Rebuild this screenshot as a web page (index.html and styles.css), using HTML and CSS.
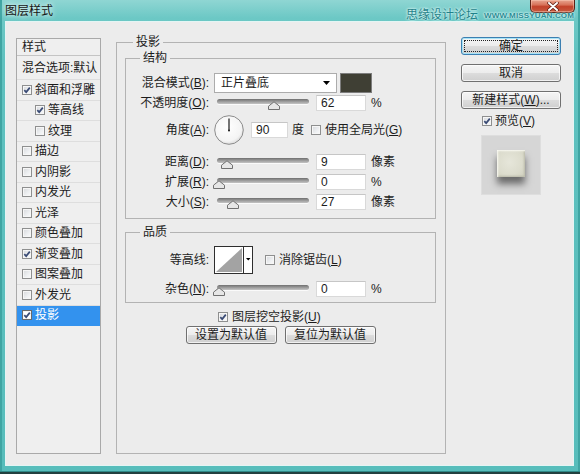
FILE: index.html
```html
<!DOCTYPE html>
<html lang="zh-CN">
<head>
<meta charset="utf-8">
<title>图层样式</title>
<link rel="stylesheet" href="styles.css">
</head>
<body>
<div class="window">
  <div class="titlebar">
    <span class="title">图层样式</span>
    <span class="watermark"><span class="wm-cn">思缘设计论坛</span><span class="wm-en">WWW.MISSYUAN.COM</span></span>
  </div>
  <span class="close"><svg width="12" height="9" viewBox="0 0 12 9"><path d="M2 1L10 8M10 1L2 8" stroke="#5a1a10" stroke-width="3.4" stroke-linecap="round"/><path d="M2 1L10 8M10 1L2 8" stroke="#fff" stroke-width="2" stroke-linecap="round"/></svg></span>

  <div class="client">
    <div class="stylelist">
      <div class="li head">样式</div>
      <div class="li blend">混合选项:默认</div>
      <div class="li"><span class="cb on"><svg viewBox="0 0 8 8"><path d="M1.3 4.1L3.2 6.1L6.8 1.6"/></svg></span>斜面和浮雕</div>
      <div class="li sub"><span class="cb on"><svg viewBox="0 0 8 8"><path d="M1.3 4.1L3.2 6.1L6.8 1.6"/></svg></span>等高线</div>
      <div class="li sub"><span class="cb"></span>纹理</div>
      <div class="li"><span class="cb"></span>描边</div>
      <div class="li"><span class="cb"></span>内阴影</div>
      <div class="li"><span class="cb"></span>内发光</div>
      <div class="li"><span class="cb"></span>光泽</div>
      <div class="li"><span class="cb"></span>颜色叠加</div>
      <div class="li"><span class="cb on"><svg viewBox="0 0 8 8"><path d="M1.3 4.1L3.2 6.1L6.8 1.6"/></svg></span>渐变叠加</div>
      <div class="li"><span class="cb"></span>图案叠加</div>
      <div class="li"><span class="cb"></span>外发光</div>
      <div class="li sel"><span class="cb on"><svg viewBox="0 0 8 8"><path d="M1.3 4.1L3.2 6.1L6.8 1.6"/></svg></span>投影</div>
    </div>

    <fieldset class="group main">
      <legend>投影</legend>

      <fieldset class="group inner structure">
        <legend>结构</legend>
        <div class="row">
          <span class="lbl">混合模式(<u>B</u>):</span>
          <span class="select"><span>正片叠底</span><svg width="7" height="4" viewBox="0 0 7 4"><path d="M0 0H7L3.5 4Z" fill="#000"/></svg></span>
          <span class="swatch"></span>
        </div>
        <div class="row">
          <span class="lbl">不透明度(<u>O</u>):</span>
          <span class="slider"><span class="track"></span><span class="thumb" style="left:53.5px"><svg width="12" height="9" viewBox="0 0 12 9"><path d="M0.5 8.5V5.2L6 0.8L11.5 5.2V8.5Z" fill="#e6e6e6" stroke="#707070"/></svg></span></span>
          <span class="num">62</span>
          <span class="unit">%</span>
        </div>
        <div class="row r-angle">
          <span class="lbl">角度(<u>A</u>):</span>
          <svg class="dial" width="30" height="30" viewBox="0 0 30 30"><defs><radialGradient id="dg" cx="45%" cy="40%" r="65%"><stop offset="0" stop-color="#ffffff"/><stop offset="0.75" stop-color="#f4f4f4"/><stop offset="1" stop-color="#d2d2d2"/></radialGradient></defs><circle cx="15" cy="15" r="14.3" fill="url(#dg)" stroke="#8c8c8c"/><line x1="15" y1="15.5" x2="15" y2="3.5" stroke="#1a1a1a" stroke-width="1.2"/><circle cx="15" cy="15.5" r="1" fill="#1a1a1a"/></svg>
          <span class="num angle">90</span>
          <span class="unit">度</span>
          <span class="cb gap7"></span>
          <span class="cb-label">使用全局光(<u>G</u>)</span>
        </div>
        <div class="row r-dist">
          <span class="lbl">距离(<u>D</u>):</span>
          <span class="slider"><span class="track"></span><span class="thumb" style="left:6.5px"><svg width="12" height="9" viewBox="0 0 12 9"><path d="M0.5 8.5V5.2L6 0.8L11.5 5.2V8.5Z" fill="#e6e6e6" stroke="#707070"/></svg></span></span>
          <span class="num">9</span>
          <span class="unit">像素</span>
        </div>
        <div class="row">
          <span class="lbl">扩展(<u>R</u>):</span>
          <span class="slider"><span class="track"></span><span class="thumb" style="left:-1.5px"><svg width="12" height="9" viewBox="0 0 12 9"><path d="M0.5 8.5V5.2L6 0.8L11.5 5.2V8.5Z" fill="#e6e6e6" stroke="#707070"/></svg></span></span>
          <span class="num">0</span>
          <span class="unit">%</span>
        </div>
        <div class="row">
          <span class="lbl">大小(<u>S</u>):</span>
          <span class="slider"><span class="track"></span><span class="thumb" style="left:12.5px"><svg width="12" height="9" viewBox="0 0 12 9"><path d="M0.5 8.5V5.2L6 0.8L11.5 5.2V8.5Z" fill="#e6e6e6" stroke="#707070"/></svg></span></span>
          <span class="num">27</span>
          <span class="unit">像素</span>
        </div>
      </fieldset>

      <fieldset class="group inner quality">
        <legend>品质</legend>
        <div class="row r-contour">
          <span class="lbl">等高线:</span>
          <svg class="contour" width="39" height="28" viewBox="0 0 39 28"><rect x="0.5" y="0.5" width="38" height="27" fill="#fff" stroke="#2e2e2e"/><path d="M2 26L28 2V26Z" fill="#a3a3a3"/><line x1="29.5" y1="0.5" x2="29.5" y2="27.5" stroke="#2e2e2e"/><path d="M32 12H36.5L34.25 14.6Z" fill="#000"/></svg>
          <span class="cb gap12"></span>
          <span class="cb-label">消除锯齿(<u>L</u>)</span>
        </div>
        <div class="row r-noise">
          <span class="lbl">杂色(<u>N</u>):</span>
          <span class="slider"><span class="track"></span><span class="thumb" style="left:-1px"><svg width="12" height="9" viewBox="0 0 12 9"><path d="M0.5 8.5V5.2L6 0.8L11.5 5.2V8.5Z" fill="#e6e6e6" stroke="#707070"/></svg></span></span>
          <span class="num">0</span>
          <span class="unit">%</span>
        </div>
      </fieldset>

      <div class="knockout"><span class="cb on"><svg viewBox="0 0 8 8"><path d="M1.3 4.1L3.2 6.1L6.8 1.6"/></svg></span><span class="cb-label">图层挖空投影(<u>U</u>)</span></div>
      <div class="defaults">
        <span class="btn wide">设置为默认值</span>
        <span class="btn wide">复位为默认值</span>
      </div>
    </fieldset>

    <div class="actions">
      <span class="btn default"><span class="focus">确定</span></span>
      <span class="btn">取消</span>
      <span class="btn">新建样式(<u>W</u>)...</span>
      <div class="preview-check"><span class="cb on"><svg viewBox="0 0 8 8"><path d="M1.3 4.1L3.2 6.1L6.8 1.6"/></svg></span><span class="cb-label">预览(<u>V</u>)</span></div>
      <div class="preview"><span class="pv-square"></span></div>
    </div>
  </div>
</div>
</body>
</html>
```
FILE: styles.css
```css
* { box-sizing: border-box; }
html, body { margin: 0; padding: 0; }
body {
  width: 580px;
  height: 474px;
  overflow: hidden;
  font: 12px/16px "Liberation Sans", "Noto Sans CJK SC", sans-serif;
  color: #1c1c1c;
  background: #55bcba;
}
u { text-decoration: underline; text-underline-offset: 1px; }

.window {
  position: relative;
  width: 580px;
  height: 474px;
  display: flex;
  flex-direction: column;
  padding: 0 6px 8px 5px;
  background: linear-gradient(180deg, #8fd6d3 0px, #6cc8c5 18px, #5ec1bf 60px, #57bdbb 100%);
  box-shadow: inset 0 -2px 0 #22403f, inset 0 -3px 0 #2f8987, inset 2px 0 0 #3fa5a3, inset -2px 0 0 #3fa5a3;
}

/* title bar */
.titlebar {
  height: 21px;
  flex: none;
  display: flex;
  align-items: flex-start;
}
.title {
  margin-top: 3px;
  font-size: 12px;
  line-height: 16px;
  color: #151515;
  text-shadow: 0 0 4px rgba(255,255,255,0.9), 0 0 8px rgba(255,255,255,0.6);
}
.watermark {
  position: relative;
  z-index: 1;
  margin-left: auto;
  align-self: flex-end;
  display: flex;
  align-items: center;
  height: 13px;
  margin-bottom: -1px;
}
.wm-cn {
  font-size: 12px;
  line-height: 13px;
  color: #1f8289;
  text-shadow: 0 0 2px #e9fbfa, 0 0 3px #e9fbfa;
}
.wm-en {
  margin-left: 6px;
  font-size: 8px;
  line-height: 13px;
  font-weight: bold;
  letter-spacing: 0.15px;
  color: #2a8d94;
  text-shadow: 0 0 2px #e9fbfa, 0 0 2px #e9fbfa;
}
.close {
  position: absolute;
  top: 0;
  right: 5px;
  width: 45px;
  height: 13px;
  display: flex;
  align-items: center;
  justify-content: center;
  border: 1px solid #5b2216;
  border-top: none;
  border-radius: 0 0 5px 5px;
  background: linear-gradient(180deg, #e7a590 0%, #d8735a 40%, #c2422a 55%, #c75a40 100%);
  box-shadow: inset 0 0 0 1px rgba(255,210,190,0.45);
}

/* client area */
.client {
  flex: 1;
  display: flex;
  border: 1px solid #e4f5f4;
  background: #ececec;
  padding: 12px 12px 11px 10px;
}

/* style list */
.stylelist {
  flex: none;
  width: 85px;
  margin-top: 4px;
  border: 1px solid #a9a9a9;
  background: #efefef;
  overflow: hidden;
}
.li {
  height: 20.5px;
  display: flex;
  align-items: center;
  padding-left: 5px;
  border-bottom: 1px solid #dedede;
  white-space: nowrap;
}
.li.head { height: 17px; border-bottom-color: #c4c4c4; }
.li.blend { height: 24px; }
.li.sub { padding-left: 18px; }
.li .cb { margin-right: 3px; }
.li.sel { background: #3392ee; color: #fff; border-bottom-color: #3392ee; }
.li.sel .cb { border-color: #6a6a6a; background: #fff; }

/* checkbox */
.cb {
  flex: none;
  width: 10px;
  height: 10px;
  display: inline-flex;
  align-items: center;
  justify-content: center;
  border: 1px solid #8e8f8f;
  background: linear-gradient(135deg, #d6d8db 0%, #eef0f2 60%, #fbfbfb 100%);
  box-shadow: inset 0 0 0 1px #f6f6f6;
}
.cb svg { width: 8px; height: 8px; }
.cb svg path { fill: none; stroke: #3a4b75; stroke-width: 1.7; }
.cb-label { margin-left: 4px; white-space: nowrap; }
.gap7 { margin-left: 7px; }
.gap12 { margin-left: 12px; }

/* group boxes */
.group {
  display: block;
  margin: 0;
  min-width: 0;
  border: 1px solid #b3b3b3;
}
.group > legend {
  padding: 0 3px;
  line-height: 16px;
}
.main {
  flex: none;
  width: 330px;
  margin-left: 15px;
  padding: 0 9px 0 8px;
}
.main > legend { margin-left: 8px; }
.inner { padding: 0; }
.inner > legend { margin-left: 14px; }
.structure { padding: 7px 0 6px; }
.quality { margin-top: 5px; padding: 6px 0 3px; }

.row {
  height: 20px;
  display: flex;
  align-items: center;
  white-space: nowrap;
}
.r-angle { height: 30px; margin-top: 2px; }
.r-dist { margin-top: 7px; }
.r-contour { height: 28px; }
.r-noise { margin-top: 5px; }
.lbl {
  flex: none;
  width: 83px;
  margin-right: 5px;
  text-align: right;
}

.select {
  flex: none;
  width: 123px;
  height: 20px;
  display: flex;
  align-items: center;
  justify-content: space-between;
  padding: 0 6px 0 6px;
  background: #fff;
  border: 1px solid #acacac;
}
.swatch {
  flex: none;
  width: 32px;
  height: 20px;
  margin-left: 3px;
  background: #3f3f34;
  border: 1px solid #7d7d7d;
}

.slider {
  position: relative;
  flex: none;
  width: 98px;
  height: 20px;
}
.track {
  display: block;
  margin: 6px 3px 0;
  height: 5px;
  border-radius: 3px;
  background: linear-gradient(180deg, #6f6f6f 0%, #9b9b9b 50%, #c4c4c4 100%);
  box-shadow: 0 1px 0 #fafafa;
}
.thumb {
  position: absolute;
  top: 8px;
  width: 12px;
  height: 9px;
  display: block;
}
.thumb svg { display: block; }

.num {
  flex: none;
  width: 50px;
  height: 16px;
  margin-left: 4px;
  padding-left: 4px;
  line-height: 14px;
  background: #fff;
  border: 1px solid #d9d9d9;
  border-top-color: #c6c6c6;
}
.num.angle { width: 37px; margin-left: 7px; }
.unit { margin-left: 5px; }
.r-angle .unit { margin-left: 4px; }
.dial { flex: none; display: block; }
.contour { flex: none; display: block; }

.knockout {
  height: 16px;
  margin-top: 6px;
  padding-left: 93px;
  display: flex;
  align-items: center;
}
.knockout .cb-label { margin-left: 4px; }
.defaults {
  margin-top: 1px;
  display: flex;
  justify-content: center;
  gap: 8px;
}

/* buttons */
.btn {
  display: flex;
  align-items: center;
  justify-content: center;
  height: 18px;
  border: 1px solid #707070;
  border-radius: 3px;
  background: linear-gradient(180deg, #f5f5f5 0%, #ececec 48%, #dcdcdc 52%, #cfcfcf 100%);
  box-shadow: inset 0 0 0 1px rgba(255,255,255,0.7);
  white-space: nowrap;
  line-height: 16px;
}
.btn.wide { width: 91px; }

.actions {
  flex: none;
  width: 100px;
  margin-left: 15px;
  margin-top: 3px;
  display: flex;
  flex-direction: column;
}
.actions .btn + .btn { margin-top: 9px; }
.btn.default {
  border-color: #3c7fb1;
  box-shadow: inset 0 0 0 1px #a7e3f7;
  padding: 2px;
}
.focus {
  width: 100%;
  height: 100%;
  display: flex;
  align-items: center;
  justify-content: center;
  outline: 1px dotted #222;
  outline-offset: -1px;
}
.preview-check {
  height: 16px;
  margin-top: 4px;
  padding-left: 21px;
  display: flex;
  align-items: center;
}
.preview-check .cb-label { margin-left: 3px; }
.preview {
  width: 60px;
  height: 60px;
  margin: 6px 0 0 20px;
  display: flex;
  align-items: center;
  justify-content: center;
  background: #d6d6d6;
  border: 1px solid #dedede;
}
.pv-square {
  width: 28px;
  height: 27px;
  margin-bottom: 3px;
  background: radial-gradient(circle at 45% 45%, #e6e6da 0%, #dcdccd 60%, #cfcfbe 100%);
  box-shadow: inset 1px 1px 2px #fbfbf4, inset -1px -1px 2px #b8b8a6, 0 7px 7px rgba(0,0,0,0.5);
}
```
